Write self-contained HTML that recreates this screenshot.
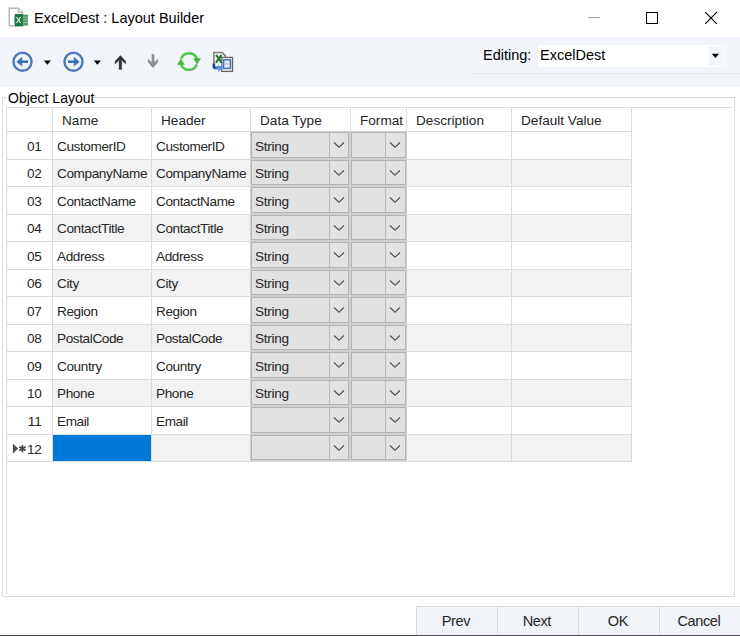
<!DOCTYPE html>
<html><head><meta charset="utf-8"><style>
html,body{margin:0;padding:0;width:740px;height:636px;overflow:hidden;background:#fff;position:relative;font-family:"Liberation Sans", sans-serif}
.t{position:absolute;white-space:nowrap;line-height:1;font-family:"Liberation Sans", sans-serif}
.r{position:absolute}
</style></head><body>
<svg class="r" style="left:7px;top:6px" width="24" height="24" viewBox="0 0 24 24">
<path d="M2.2 2.2 H11.3 L15.6 6.5 V19.8 H2.2 Z" fill="#fff" stroke="#b8b8b8" stroke-width="1.5"/>
<path d="M11.3 2.2 V6.5 H15.6" fill="#e6e6e6" stroke="#b8b8b8" stroke-width="1.2"/>
<rect x="15.6" y="8.6" width="5.4" height="11" fill="#4f9a6c"/>
<path d="M16 11.2h5M16 13.8h5M16 16.4h5" stroke="#a7d4b6" stroke-width="0.8"/>
<path d="M7.8 8 H15.8 V20.3 H7.8 Q7 14 7.8 8 Z" fill="#217346"/>
<path d="M9.6 11 L13.6 17 M13.6 11 L9.6 17" stroke="#cfeedd" stroke-width="1.3"/>
</svg>
<div class="t" style="left:34px;top:11.05px;font-size:14.5px;color:#000;">ExcelDest : Layout Builder</div>
<div class="r" style="left:588px;top:17px;width:12px;height:1px;background:#a0a0a0"></div>
<div class="r" style="left:646px;top:12px;width:12px;height:12px;border:1px solid #000;box-sizing:border-box"></div>
<svg class="r" style="left:704px;top:11px" width="14" height="14" viewBox="0 0 14 14">
<path d="M1.2 1.2 L12.8 12.8 M12.8 1.2 L1.2 12.8" stroke="#000" stroke-width="1.1"/></svg>
<div class="r" style="left:0px;top:37px;width:740px;height:50px;background:#f2f5f9"></div>
<div class="r" style="left:470px;top:73px;width:270px;height:1px;background:#e8ebf0"></div>
<svg class="r" style="left:11px;top:50px" width="24" height="24" viewBox="0 0 24 24">
<circle cx="11.5" cy="11.7" r="9" fill="none" stroke="#4f7db8" stroke-width="2.5"/>
<path d="M17 11.7 H9" stroke="#3b6fae" stroke-width="2.6"/>
<path d="M5.8 11.7 L10.8 7.3 L10.8 16.1 Z" fill="#3b6fae" stroke="#3b6fae" stroke-width="0.6" stroke-linejoin="round"/>
</svg>
<svg class="r" style="left:43px;top:60px" width="9" height="6" viewBox="0 0 9 6"><path d="M0.8 0.5 H8 L4.4 4.8 Z" fill="#000"/></svg>
<svg class="r" style="left:62px;top:50px" width="24" height="24" viewBox="0 0 24 24">
<circle cx="11.5" cy="11.7" r="9" fill="none" stroke="#4f7db8" stroke-width="2.5"/>
<path d="M6 11.7 H14" stroke="#3b6fae" stroke-width="2.6"/>
<path d="M17.2 11.7 L12.2 7.3 L12.2 16.1 Z" fill="#3b6fae" stroke="#3b6fae" stroke-width="0.6" stroke-linejoin="round"/>
</svg>
<svg class="r" style="left:93px;top:60px" width="9" height="6" viewBox="0 0 9 6"><path d="M0.8 0.5 H8 L4.4 4.8 Z" fill="#000"/></svg>
<svg class="r" style="left:110px;top:50px" width="22" height="24" viewBox="0 0 22 24">
<path d="M10.4 5.6 L15.7 11.2 L15.7 14 L11.7 10.3 L11.7 19.4 L9.1 19.4 L9.1 10.3 L5.1 14 L5.1 11.2 Z" fill="#333" stroke="#333" stroke-width="0.4" stroke-linejoin="round"/>
</svg>
<svg class="r" style="left:142px;top:50px" width="22" height="24" viewBox="0 0 22 24">
<path d="M9.9 4.3 L12.1 4.3 L12.1 12.6 L15.8 9.2 L15.8 12.2 L11 17.7 L6.2 12.2 L6.2 9.2 L9.9 12.6 Z" fill="#8e8e8e" stroke="#8e8e8e" stroke-width="0.4" stroke-linejoin="round"/>
</svg>
<svg class="r" style="left:172px;top:47px" width="34" height="29" viewBox="0 0 34 29">
<path d="M9.2 11.66 A 8.3 8.3 0 0 1 25.02 12.2" fill="none" stroke="#4fc64f" stroke-width="2.5"/>
<path d="M21.6 11.5 L28.6 11.5 L25.1 17.2 Z" fill="#3dbb3d" stroke="#3dbb3d" stroke-width="0.5" stroke-linejoin="round"/>
<path d="M24.8 17.34 A 8.3 8.3 0 0 1 8.98 16.8" fill="none" stroke="#4fc64f" stroke-width="2.5"/>
<path d="M5.4 17.6 L12.4 17.6 L8.9 11.9 Z" fill="#3dbb3d" stroke="#3dbb3d" stroke-width="0.5" stroke-linejoin="round"/>
</svg>
<svg class="r" style="left:208px;top:48px" width="30" height="28" viewBox="0 0 30 28">
<defs><linearGradient id="ga" x1="0" y1="0" x2="1" y2="0"><stop offset="0" stop-color="#0d3f93"/><stop offset="1" stop-color="#6cb4f0"/></linearGradient></defs>
<path d="M5.9 4.6 H14.2 L17.4 7.8 V19 H5.9 Z" fill="#f7f7f7" stroke="#7a7a7a" stroke-width="1.5"/>
<path d="M8 7 Q11.5 10.5 13.4 14.8 M13.6 7 Q10 11 8 14.8" fill="none" stroke="#237a33" stroke-width="2.2"/>
<rect x="13.8" y="9.4" width="10.7" height="14" fill="#f0f3fa" stroke="#666" stroke-width="1.3"/>
<rect x="15.6" y="11.8" width="6.8" height="8.6" fill="#e3eafa" stroke="#4f72c0" stroke-width="1.5"/>
<path d="M16.2 16h5.6" stroke="#a9bde6" stroke-width="1"/>
<path d="M5.9 15.5 V18.2 Q5.9 20.2 8 20.2 H11" fill="none" stroke="url(#ga)" stroke-width="2.6"/>
<path d="M10.2 16.6 L14.6 20.2 L10.2 23.8 Z" fill="#4a98e6"/>
</svg>
<div class="t" style="left:483px;top:48.25px;font-size:14.5px;color:#000;">Editing:</div>
<div class="r" style="left:538px;top:45px;width:186px;height:22px;background:#fff"></div>
<div class="r" style="left:709px;top:46px;width:14px;height:20px;background:#f2f5f9"></div>
<div class="t" style="left:540px;top:48.25px;font-size:14.5px;color:#000;">ExcelDest</div>
<svg class="r" style="left:711px;top:53px" width="9" height="6" viewBox="0 0 9 6"><path d="M0.8 0.8 H8 L4.4 5 Z" fill="#000"/></svg>
<div class="r" style="left:2px;top:97px;width:733px;height:500px;border:1px solid #dcdcdc;box-sizing:border-box"></div>
<div class="r" style="left:7px;top:90px;width:87px;height:12px;background:#fff"></div>
<div class="t" style="left:8px;top:91.30px;font-size:14px;color:#000;">Object Layout</div>
<div class="r" style="left:6px;top:107px;width:725px;height:1px;background:#dcdcdc"></div>
<div class="r" style="left:6px;top:107px;width:1px;height:487px;background:#dcdcdc"></div>
<div class="r" style="left:53px;top:160px;width:578px;height:26px;background:#f2f2f2"></div>
<div class="r" style="left:53px;top:215px;width:578px;height:26px;background:#f2f2f2"></div>
<div class="r" style="left:53px;top:270px;width:578px;height:26px;background:#f2f2f2"></div>
<div class="r" style="left:53px;top:325px;width:578px;height:26px;background:#f2f2f2"></div>
<div class="r" style="left:53px;top:380px;width:578px;height:26px;background:#f2f2f2"></div>
<div class="r" style="left:53px;top:435px;width:578px;height:26px;background:#f2f2f2"></div>
<div class="r" style="left:52px;top:107px;width:1px;height:24px;background:#dcdcdc"></div>
<div class="r" style="left:151px;top:107px;width:1px;height:24px;background:#dcdcdc"></div>
<div class="r" style="left:250px;top:107px;width:1px;height:24px;background:#dcdcdc"></div>
<div class="r" style="left:350px;top:107px;width:1px;height:24px;background:#dcdcdc"></div>
<div class="r" style="left:406px;top:107px;width:1px;height:24px;background:#dcdcdc"></div>
<div class="r" style="left:511px;top:107px;width:1px;height:24px;background:#dcdcdc"></div>
<div class="r" style="left:631px;top:107px;width:1px;height:24px;background:#dcdcdc"></div>
<div class="r" style="left:6px;top:131px;width:626px;height:1px;background:#dcdcdc"></div>
<div class="r" style="left:6px;top:159px;width:626px;height:1px;background:#dcdcdc"></div>
<div class="r" style="left:6px;top:186px;width:626px;height:1px;background:#dcdcdc"></div>
<div class="r" style="left:6px;top:214px;width:626px;height:1px;background:#dcdcdc"></div>
<div class="r" style="left:6px;top:241px;width:626px;height:1px;background:#dcdcdc"></div>
<div class="r" style="left:6px;top:269px;width:626px;height:1px;background:#dcdcdc"></div>
<div class="r" style="left:6px;top:296px;width:626px;height:1px;background:#dcdcdc"></div>
<div class="r" style="left:6px;top:324px;width:626px;height:1px;background:#dcdcdc"></div>
<div class="r" style="left:6px;top:351px;width:626px;height:1px;background:#dcdcdc"></div>
<div class="r" style="left:6px;top:379px;width:626px;height:1px;background:#dcdcdc"></div>
<div class="r" style="left:6px;top:406px;width:626px;height:1px;background:#dcdcdc"></div>
<div class="r" style="left:6px;top:434px;width:626px;height:1px;background:#dcdcdc"></div>
<div class="r" style="left:6px;top:461px;width:626px;height:1px;background:#dcdcdc"></div>
<div class="r" style="left:52px;top:131px;width:1px;height:330px;background:#dcdcdc"></div>
<div class="r" style="left:151px;top:131px;width:1px;height:330px;background:#dcdcdc"></div>
<div class="r" style="left:250px;top:131px;width:1px;height:330px;background:#dcdcdc"></div>
<div class="r" style="left:350px;top:131px;width:1px;height:330px;background:#dcdcdc"></div>
<div class="r" style="left:406px;top:131px;width:1px;height:330px;background:#dcdcdc"></div>
<div class="r" style="left:511px;top:131px;width:1px;height:330px;background:#dcdcdc"></div>
<div class="r" style="left:631px;top:131px;width:1px;height:330px;background:#dcdcdc"></div>
<div class="t" style="left:62px;top:113.90px;font-size:13.6px;color:#262626;">Name</div>
<div class="t" style="left:161px;top:113.90px;font-size:13.6px;color:#262626;">Header</div>
<div class="t" style="left:260px;top:113.90px;font-size:13.6px;color:#262626;">Data Type</div>
<div class="t" style="left:360px;top:113.90px;font-size:13.6px;color:#262626;">Format</div>
<div class="t" style="left:416px;top:113.90px;font-size:13.6px;color:#262626;">Description</div>
<div class="t" style="left:521px;top:113.90px;font-size:13.6px;color:#262626;">Default Value</div>
<div class="t" style="left:27px;top:140.00px;font-size:13.6px;color:#262626;width:14.5px;text-align:right;letter-spacing:-0.2px">01</div>
<div class="t" style="left:57px;top:140.00px;font-size:13.6px;color:#262626;letter-spacing:-0.4px">CustomerID</div>
<div class="t" style="left:156px;top:140.00px;font-size:13.6px;color:#262626;letter-spacing:-0.4px">CustomerID</div>
<div class="r" style="left:251px;top:132px;width:98px;height:26px;background:#e2e2e2;border:1px solid #b4b4b4;box-sizing:border-box;box-shadow:0 0 0 1px #d0d0d0"></div>
<div class="r" style="left:329px;top:132px;width:1px;height:26px;background:#b8b8b8"></div>
<svg class="r" style="left:333.0px;top:141.0px" width="12" height="8" viewBox="0 0 12 8"><path d="M1 1.5 L6 6.2 L11 1.5" fill="none" stroke="#555" stroke-width="1.2"/></svg>
<div class="r" style="left:351px;top:132px;width:55px;height:26px;background:#e2e2e2;border:1px solid #b4b4b4;box-sizing:border-box;box-shadow:0 0 0 1px #d0d0d0"></div>
<div class="r" style="left:385px;top:132px;width:1px;height:26px;background:#b8b8b8"></div>
<svg class="r" style="left:389.0px;top:141.0px" width="12" height="8" viewBox="0 0 12 8"><path d="M1 1.5 L6 6.2 L11 1.5" fill="none" stroke="#555" stroke-width="1.2"/></svg>
<div class="t" style="left:255px;top:140.00px;font-size:13.6px;color:#262626;letter-spacing:-0.3px">String</div>
<div class="t" style="left:27px;top:167.00px;font-size:13.6px;color:#262626;width:14.5px;text-align:right;letter-spacing:-0.2px">02</div>
<div class="t" style="left:57px;top:167.00px;font-size:13.6px;color:#262626;letter-spacing:-0.4px">CompanyName</div>
<div class="t" style="left:156px;top:167.00px;font-size:13.6px;color:#262626;letter-spacing:-0.4px">CompanyName</div>
<div class="r" style="left:251px;top:160px;width:98px;height:25px;background:#e2e2e2;border:1px solid #b4b4b4;box-sizing:border-box;box-shadow:0 0 0 1px #d0d0d0"></div>
<div class="r" style="left:329px;top:160px;width:1px;height:25px;background:#b8b8b8"></div>
<svg class="r" style="left:333.0px;top:168.5px" width="12" height="8" viewBox="0 0 12 8"><path d="M1 1.5 L6 6.2 L11 1.5" fill="none" stroke="#555" stroke-width="1.2"/></svg>
<div class="r" style="left:351px;top:160px;width:55px;height:25px;background:#e2e2e2;border:1px solid #b4b4b4;box-sizing:border-box;box-shadow:0 0 0 1px #d0d0d0"></div>
<div class="r" style="left:385px;top:160px;width:1px;height:25px;background:#b8b8b8"></div>
<svg class="r" style="left:389.0px;top:168.5px" width="12" height="8" viewBox="0 0 12 8"><path d="M1 1.5 L6 6.2 L11 1.5" fill="none" stroke="#555" stroke-width="1.2"/></svg>
<div class="t" style="left:255px;top:167.00px;font-size:13.6px;color:#262626;letter-spacing:-0.3px">String</div>
<div class="t" style="left:27px;top:195.00px;font-size:13.6px;color:#262626;width:14.5px;text-align:right;letter-spacing:-0.2px">03</div>
<div class="t" style="left:57px;top:195.00px;font-size:13.6px;color:#262626;letter-spacing:-0.4px">ContactName</div>
<div class="t" style="left:156px;top:195.00px;font-size:13.6px;color:#262626;letter-spacing:-0.4px">ContactName</div>
<div class="r" style="left:251px;top:187px;width:98px;height:26px;background:#e2e2e2;border:1px solid #b4b4b4;box-sizing:border-box;box-shadow:0 0 0 1px #d0d0d0"></div>
<div class="r" style="left:329px;top:187px;width:1px;height:26px;background:#b8b8b8"></div>
<svg class="r" style="left:333.0px;top:196.0px" width="12" height="8" viewBox="0 0 12 8"><path d="M1 1.5 L6 6.2 L11 1.5" fill="none" stroke="#555" stroke-width="1.2"/></svg>
<div class="r" style="left:351px;top:187px;width:55px;height:26px;background:#e2e2e2;border:1px solid #b4b4b4;box-sizing:border-box;box-shadow:0 0 0 1px #d0d0d0"></div>
<div class="r" style="left:385px;top:187px;width:1px;height:26px;background:#b8b8b8"></div>
<svg class="r" style="left:389.0px;top:196.0px" width="12" height="8" viewBox="0 0 12 8"><path d="M1 1.5 L6 6.2 L11 1.5" fill="none" stroke="#555" stroke-width="1.2"/></svg>
<div class="t" style="left:255px;top:195.00px;font-size:13.6px;color:#262626;letter-spacing:-0.3px">String</div>
<div class="t" style="left:27px;top:222.00px;font-size:13.6px;color:#262626;width:14.5px;text-align:right;letter-spacing:-0.2px">04</div>
<div class="t" style="left:57px;top:222.00px;font-size:13.6px;color:#262626;letter-spacing:-0.4px">ContactTitle</div>
<div class="t" style="left:156px;top:222.00px;font-size:13.6px;color:#262626;letter-spacing:-0.4px">ContactTitle</div>
<div class="r" style="left:251px;top:215px;width:98px;height:25px;background:#e2e2e2;border:1px solid #b4b4b4;box-sizing:border-box;box-shadow:0 0 0 1px #d0d0d0"></div>
<div class="r" style="left:329px;top:215px;width:1px;height:25px;background:#b8b8b8"></div>
<svg class="r" style="left:333.0px;top:223.5px" width="12" height="8" viewBox="0 0 12 8"><path d="M1 1.5 L6 6.2 L11 1.5" fill="none" stroke="#555" stroke-width="1.2"/></svg>
<div class="r" style="left:351px;top:215px;width:55px;height:25px;background:#e2e2e2;border:1px solid #b4b4b4;box-sizing:border-box;box-shadow:0 0 0 1px #d0d0d0"></div>
<div class="r" style="left:385px;top:215px;width:1px;height:25px;background:#b8b8b8"></div>
<svg class="r" style="left:389.0px;top:223.5px" width="12" height="8" viewBox="0 0 12 8"><path d="M1 1.5 L6 6.2 L11 1.5" fill="none" stroke="#555" stroke-width="1.2"/></svg>
<div class="t" style="left:255px;top:222.00px;font-size:13.6px;color:#262626;letter-spacing:-0.3px">String</div>
<div class="t" style="left:27px;top:250.00px;font-size:13.6px;color:#262626;width:14.5px;text-align:right;letter-spacing:-0.2px">05</div>
<div class="t" style="left:57px;top:250.00px;font-size:13.6px;color:#262626;letter-spacing:-0.4px">Address</div>
<div class="t" style="left:156px;top:250.00px;font-size:13.6px;color:#262626;letter-spacing:-0.4px">Address</div>
<div class="r" style="left:251px;top:242px;width:98px;height:26px;background:#e2e2e2;border:1px solid #b4b4b4;box-sizing:border-box;box-shadow:0 0 0 1px #d0d0d0"></div>
<div class="r" style="left:329px;top:242px;width:1px;height:26px;background:#b8b8b8"></div>
<svg class="r" style="left:333.0px;top:251.0px" width="12" height="8" viewBox="0 0 12 8"><path d="M1 1.5 L6 6.2 L11 1.5" fill="none" stroke="#555" stroke-width="1.2"/></svg>
<div class="r" style="left:351px;top:242px;width:55px;height:26px;background:#e2e2e2;border:1px solid #b4b4b4;box-sizing:border-box;box-shadow:0 0 0 1px #d0d0d0"></div>
<div class="r" style="left:385px;top:242px;width:1px;height:26px;background:#b8b8b8"></div>
<svg class="r" style="left:389.0px;top:251.0px" width="12" height="8" viewBox="0 0 12 8"><path d="M1 1.5 L6 6.2 L11 1.5" fill="none" stroke="#555" stroke-width="1.2"/></svg>
<div class="t" style="left:255px;top:250.00px;font-size:13.6px;color:#262626;letter-spacing:-0.3px">String</div>
<div class="t" style="left:27px;top:277.00px;font-size:13.6px;color:#262626;width:14.5px;text-align:right;letter-spacing:-0.2px">06</div>
<div class="t" style="left:57px;top:277.00px;font-size:13.6px;color:#262626;letter-spacing:-0.4px">City</div>
<div class="t" style="left:156px;top:277.00px;font-size:13.6px;color:#262626;letter-spacing:-0.4px">City</div>
<div class="r" style="left:251px;top:270px;width:98px;height:25px;background:#e2e2e2;border:1px solid #b4b4b4;box-sizing:border-box;box-shadow:0 0 0 1px #d0d0d0"></div>
<div class="r" style="left:329px;top:270px;width:1px;height:25px;background:#b8b8b8"></div>
<svg class="r" style="left:333.0px;top:278.5px" width="12" height="8" viewBox="0 0 12 8"><path d="M1 1.5 L6 6.2 L11 1.5" fill="none" stroke="#555" stroke-width="1.2"/></svg>
<div class="r" style="left:351px;top:270px;width:55px;height:25px;background:#e2e2e2;border:1px solid #b4b4b4;box-sizing:border-box;box-shadow:0 0 0 1px #d0d0d0"></div>
<div class="r" style="left:385px;top:270px;width:1px;height:25px;background:#b8b8b8"></div>
<svg class="r" style="left:389.0px;top:278.5px" width="12" height="8" viewBox="0 0 12 8"><path d="M1 1.5 L6 6.2 L11 1.5" fill="none" stroke="#555" stroke-width="1.2"/></svg>
<div class="t" style="left:255px;top:277.00px;font-size:13.6px;color:#262626;letter-spacing:-0.3px">String</div>
<div class="t" style="left:27px;top:305.00px;font-size:13.6px;color:#262626;width:14.5px;text-align:right;letter-spacing:-0.2px">07</div>
<div class="t" style="left:57px;top:305.00px;font-size:13.6px;color:#262626;letter-spacing:-0.4px">Region</div>
<div class="t" style="left:156px;top:305.00px;font-size:13.6px;color:#262626;letter-spacing:-0.4px">Region</div>
<div class="r" style="left:251px;top:297px;width:98px;height:26px;background:#e2e2e2;border:1px solid #b4b4b4;box-sizing:border-box;box-shadow:0 0 0 1px #d0d0d0"></div>
<div class="r" style="left:329px;top:297px;width:1px;height:26px;background:#b8b8b8"></div>
<svg class="r" style="left:333.0px;top:306.0px" width="12" height="8" viewBox="0 0 12 8"><path d="M1 1.5 L6 6.2 L11 1.5" fill="none" stroke="#555" stroke-width="1.2"/></svg>
<div class="r" style="left:351px;top:297px;width:55px;height:26px;background:#e2e2e2;border:1px solid #b4b4b4;box-sizing:border-box;box-shadow:0 0 0 1px #d0d0d0"></div>
<div class="r" style="left:385px;top:297px;width:1px;height:26px;background:#b8b8b8"></div>
<svg class="r" style="left:389.0px;top:306.0px" width="12" height="8" viewBox="0 0 12 8"><path d="M1 1.5 L6 6.2 L11 1.5" fill="none" stroke="#555" stroke-width="1.2"/></svg>
<div class="t" style="left:255px;top:305.00px;font-size:13.6px;color:#262626;letter-spacing:-0.3px">String</div>
<div class="t" style="left:27px;top:332.00px;font-size:13.6px;color:#262626;width:14.5px;text-align:right;letter-spacing:-0.2px">08</div>
<div class="t" style="left:57px;top:332.00px;font-size:13.6px;color:#262626;letter-spacing:-0.4px">PostalCode</div>
<div class="t" style="left:156px;top:332.00px;font-size:13.6px;color:#262626;letter-spacing:-0.4px">PostalCode</div>
<div class="r" style="left:251px;top:325px;width:98px;height:25px;background:#e2e2e2;border:1px solid #b4b4b4;box-sizing:border-box;box-shadow:0 0 0 1px #d0d0d0"></div>
<div class="r" style="left:329px;top:325px;width:1px;height:25px;background:#b8b8b8"></div>
<svg class="r" style="left:333.0px;top:333.5px" width="12" height="8" viewBox="0 0 12 8"><path d="M1 1.5 L6 6.2 L11 1.5" fill="none" stroke="#555" stroke-width="1.2"/></svg>
<div class="r" style="left:351px;top:325px;width:55px;height:25px;background:#e2e2e2;border:1px solid #b4b4b4;box-sizing:border-box;box-shadow:0 0 0 1px #d0d0d0"></div>
<div class="r" style="left:385px;top:325px;width:1px;height:25px;background:#b8b8b8"></div>
<svg class="r" style="left:389.0px;top:333.5px" width="12" height="8" viewBox="0 0 12 8"><path d="M1 1.5 L6 6.2 L11 1.5" fill="none" stroke="#555" stroke-width="1.2"/></svg>
<div class="t" style="left:255px;top:332.00px;font-size:13.6px;color:#262626;letter-spacing:-0.3px">String</div>
<div class="t" style="left:27px;top:360.00px;font-size:13.6px;color:#262626;width:14.5px;text-align:right;letter-spacing:-0.2px">09</div>
<div class="t" style="left:57px;top:360.00px;font-size:13.6px;color:#262626;letter-spacing:-0.4px">Country</div>
<div class="t" style="left:156px;top:360.00px;font-size:13.6px;color:#262626;letter-spacing:-0.4px">Country</div>
<div class="r" style="left:251px;top:352px;width:98px;height:26px;background:#e2e2e2;border:1px solid #b4b4b4;box-sizing:border-box;box-shadow:0 0 0 1px #d0d0d0"></div>
<div class="r" style="left:329px;top:352px;width:1px;height:26px;background:#b8b8b8"></div>
<svg class="r" style="left:333.0px;top:361.0px" width="12" height="8" viewBox="0 0 12 8"><path d="M1 1.5 L6 6.2 L11 1.5" fill="none" stroke="#555" stroke-width="1.2"/></svg>
<div class="r" style="left:351px;top:352px;width:55px;height:26px;background:#e2e2e2;border:1px solid #b4b4b4;box-sizing:border-box;box-shadow:0 0 0 1px #d0d0d0"></div>
<div class="r" style="left:385px;top:352px;width:1px;height:26px;background:#b8b8b8"></div>
<svg class="r" style="left:389.0px;top:361.0px" width="12" height="8" viewBox="0 0 12 8"><path d="M1 1.5 L6 6.2 L11 1.5" fill="none" stroke="#555" stroke-width="1.2"/></svg>
<div class="t" style="left:255px;top:360.00px;font-size:13.6px;color:#262626;letter-spacing:-0.3px">String</div>
<div class="t" style="left:27px;top:387.00px;font-size:13.6px;color:#262626;width:14.5px;text-align:right;letter-spacing:-0.2px">10</div>
<div class="t" style="left:57px;top:387.00px;font-size:13.6px;color:#262626;letter-spacing:-0.4px">Phone</div>
<div class="t" style="left:156px;top:387.00px;font-size:13.6px;color:#262626;letter-spacing:-0.4px">Phone</div>
<div class="r" style="left:251px;top:380px;width:98px;height:25px;background:#e2e2e2;border:1px solid #b4b4b4;box-sizing:border-box;box-shadow:0 0 0 1px #d0d0d0"></div>
<div class="r" style="left:329px;top:380px;width:1px;height:25px;background:#b8b8b8"></div>
<svg class="r" style="left:333.0px;top:388.5px" width="12" height="8" viewBox="0 0 12 8"><path d="M1 1.5 L6 6.2 L11 1.5" fill="none" stroke="#555" stroke-width="1.2"/></svg>
<div class="r" style="left:351px;top:380px;width:55px;height:25px;background:#e2e2e2;border:1px solid #b4b4b4;box-sizing:border-box;box-shadow:0 0 0 1px #d0d0d0"></div>
<div class="r" style="left:385px;top:380px;width:1px;height:25px;background:#b8b8b8"></div>
<svg class="r" style="left:389.0px;top:388.5px" width="12" height="8" viewBox="0 0 12 8"><path d="M1 1.5 L6 6.2 L11 1.5" fill="none" stroke="#555" stroke-width="1.2"/></svg>
<div class="t" style="left:255px;top:387.00px;font-size:13.6px;color:#262626;letter-spacing:-0.3px">String</div>
<div class="t" style="left:27px;top:415.00px;font-size:13.6px;color:#262626;width:14.5px;text-align:right;letter-spacing:-0.2px">11</div>
<div class="t" style="left:57px;top:415.00px;font-size:13.6px;color:#262626;letter-spacing:-0.4px">Email</div>
<div class="t" style="left:156px;top:415.00px;font-size:13.6px;color:#262626;letter-spacing:-0.4px">Email</div>
<div class="r" style="left:251px;top:407px;width:98px;height:26px;background:#e2e2e2;border:1px solid #b4b4b4;box-sizing:border-box;box-shadow:0 0 0 1px #d0d0d0"></div>
<div class="r" style="left:329px;top:407px;width:1px;height:26px;background:#b8b8b8"></div>
<svg class="r" style="left:333.0px;top:416.0px" width="12" height="8" viewBox="0 0 12 8"><path d="M1 1.5 L6 6.2 L11 1.5" fill="none" stroke="#555" stroke-width="1.2"/></svg>
<div class="r" style="left:351px;top:407px;width:55px;height:26px;background:#e2e2e2;border:1px solid #b4b4b4;box-sizing:border-box;box-shadow:0 0 0 1px #d0d0d0"></div>
<div class="r" style="left:385px;top:407px;width:1px;height:26px;background:#b8b8b8"></div>
<svg class="r" style="left:389.0px;top:416.0px" width="12" height="8" viewBox="0 0 12 8"><path d="M1 1.5 L6 6.2 L11 1.5" fill="none" stroke="#555" stroke-width="1.2"/></svg>
<div class="t" style="left:27px;top:443.00px;font-size:13.6px;color:#262626;width:14.5px;text-align:right;letter-spacing:-0.2px">12</div>
<div class="r" style="left:251px;top:435px;width:98px;height:25px;background:#e2e2e2;border:1px solid #b4b4b4;box-sizing:border-box;box-shadow:0 0 0 1px #d0d0d0"></div>
<div class="r" style="left:329px;top:435px;width:1px;height:25px;background:#b8b8b8"></div>
<svg class="r" style="left:333.0px;top:443.5px" width="12" height="8" viewBox="0 0 12 8"><path d="M1 1.5 L6 6.2 L11 1.5" fill="none" stroke="#555" stroke-width="1.2"/></svg>
<div class="r" style="left:351px;top:435px;width:55px;height:25px;background:#e2e2e2;border:1px solid #b4b4b4;box-sizing:border-box;box-shadow:0 0 0 1px #d0d0d0"></div>
<div class="r" style="left:385px;top:435px;width:1px;height:25px;background:#b8b8b8"></div>
<svg class="r" style="left:389.0px;top:443.5px" width="12" height="8" viewBox="0 0 12 8"><path d="M1 1.5 L6 6.2 L11 1.5" fill="none" stroke="#555" stroke-width="1.2"/></svg>
<div class="r" style="left:53px;top:435px;width:98px;height:26px;background:#0078d7"></div>
<svg class="r" style="left:12px;top:444px" width="16" height="11" viewBox="0 0 16 11">
<path d="M0.9 -0.2 L6.2 4.6 L0.9 9.4 Z" fill="#4a4a4a"/>
<path d="M10.4 0.9 V8.3 M7.2 2.75 L13.6 6.45 M13.6 2.75 L7.2 6.45" stroke="#4a4a4a" stroke-width="1.7"/>
</svg>
<div class="r" style="left:416px;top:606px;width:324px;height:30px;background:#f0f3f7;border-top:1px solid #d5d8dc;border-left:1px solid #d5d8dc;box-sizing:border-box"></div>
<div class="r" style="left:497px;top:607px;width:1px;height:29px;background:#d5d8dc"></div>
<div class="r" style="left:578px;top:607px;width:1px;height:29px;background:#d5d8dc"></div>
<div class="r" style="left:659px;top:607px;width:1px;height:29px;background:#d5d8dc"></div>
<div class="t" style="left:415.4px;top:614.03px;width:81px;text-align:center;font-size:14.5px;letter-spacing:-0.4px;color:#262626">Prev</div>
<div class="t" style="left:496.4px;top:614.03px;width:81px;text-align:center;font-size:14.5px;letter-spacing:-0.4px;color:#262626">Next</div>
<div class="t" style="left:577.4px;top:614.03px;width:81px;text-align:center;font-size:14.5px;letter-spacing:-0.4px;color:#262626">OK</div>
<div class="t" style="left:658.4px;top:614.03px;width:81px;text-align:center;font-size:14.5px;letter-spacing:-0.4px;color:#262626">Cancel</div>
<div class="r" style="left:0px;top:635px;width:740px;height:1px;background:#4d4d4d"></div>
</body></html>
